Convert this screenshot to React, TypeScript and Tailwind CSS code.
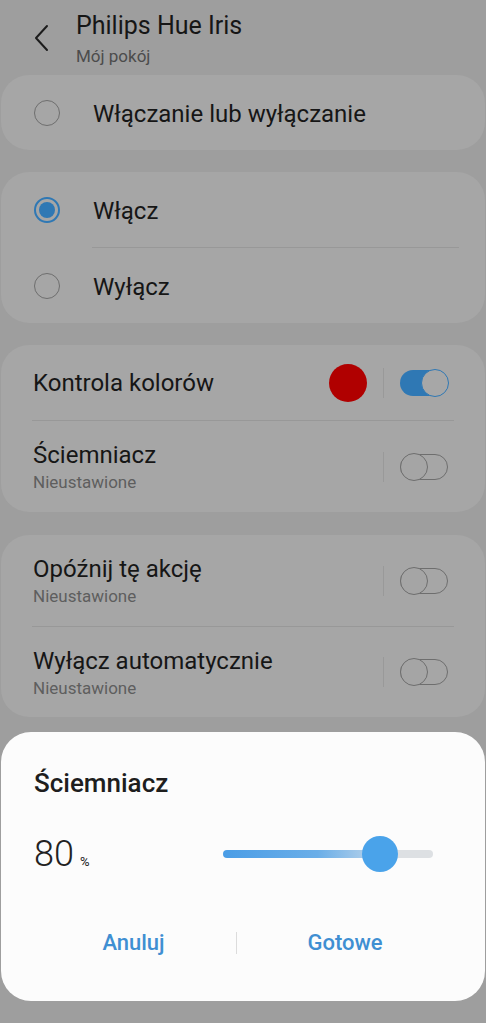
import { ReactNode } from "react";

const font = { fontFamily: "Roboto, 'Noto Sans', sans-serif" };

function Radio({ checked }: { checked?: boolean }) {
  return checked ? (
    <div className="w-[26px] h-[26px] rounded-full border-2 border-[#2f78b4] flex items-center justify-center">
      <div className="w-[16px] h-[16px] rounded-full bg-[#2f78b4]" />
    </div>
  ) : (
    <div className="w-[26px] h-[26px] rounded-full border-[1.5px] border-[#6e6e6e]" />
  );
}

function Toggle({ on }: { on?: boolean }) {
  return (
    <div className="relative w-[49px] h-[28px] flex items-center">
      <div
        className={
          on
            ? "w-[48px] h-[26px] rounded-full bg-[#2f78b4]"
            : "w-[48px] h-[26px] rounded-full border-[1.5px] border-[#6e6e6e]"
        }
      />
      <div
        className={
          on
            ? "absolute right-0 top-0 w-[28px] h-[28px] rounded-full bg-[#a7a7a7] border-[1.5px] border-[#2f78b4]"
            : "absolute left-0 top-0 w-[28px] h-[28px] rounded-full bg-[#a5a5a5] border-[1.5px] border-[#6e6e6e]"
        }
      />
    </div>
  );
}

function VDivider() {
  return <div className="w-px h-[30px] bg-[#999999]" />;
}

function RadioRow({ label, checked }: { label: string; checked?: boolean }) {
  return (
    <div className="flex items-center h-full pl-[33px]">
      <Radio checked={checked} />
      <span className="ml-[33px] mt-[2px] text-[24px] leading-[30px] text-[#161616]">{label}</span>
    </div>
  );
}

function SettingRow({
  title,
  sub,
  right,
  h,
}: {
  title: string;
  sub?: string;
  right: ReactNode;
  h: string;
}) {
  return (
    <div className={`flex items-center pl-[32px] pr-[36px] ${h}`}>
      <div className="flex-1 flex flex-col">
        <span className="text-[24px] leading-[30px] text-[#161616]">{title}</span>
        {sub && <span className="text-[17px] leading-[22px] mt-[1px] text-[#5e5e5e]">{sub}</span>}
      </div>
      {right}
    </div>
  );
}

function OffControl() {
  return (
    <div className="flex items-center">
      <VDivider />
      <div className="ml-[16px]">
        <Toggle />
      </div>
    </div>
  );
}

export default function App() {
  return (
    <div
      className="relative w-[486px] h-[1023px] bg-[#9e9e9e] overflow-hidden flex flex-col"
      style={font}
    >
      {/* Header */}
      <div className="flex h-[75px] pt-[11px] pl-[34px]">
        <svg width="16" height="28" viewBox="0 0 16 28" className="mt-[13px] mr-[26px]">
          <path d="M13 2 L2 14 L13 26" fill="none" stroke="#1c1c1c" strokeWidth="2" strokeLinecap="round" strokeLinejoin="round" />
        </svg>
        <div className="flex flex-col">
          <span className="text-[25px] leading-[30px] text-[#161616]">Philips Hue Iris</span>
          <span className="text-[17px] leading-[22px] text-[#4c4c4c] mt-[4px]">Mój pokój</span>
        </div>
      </div>

      {/* Card 1 */}
      <div className="mx-px h-[75px] rounded-[28px] bg-[#a6a6a6]">
        <RadioRow label="Włączanie lub wyłączanie" />
      </div>

      {/* Card 2 */}
      <div className="mx-px mt-[22px] h-[151px] rounded-[28px] bg-[#a6a6a6] flex flex-col">
        <div className="h-[75px]">
          <RadioRow label="Włącz" checked />
        </div>
        <div className="ml-[91px] mr-[26px] h-px bg-[#989898]" />
        <div className="h-[75px]">
          <RadioRow label="Wyłącz" />
        </div>
      </div>

      {/* Card 3 */}
      <div className="mx-px mt-[22px] h-[167px] rounded-[28px] bg-[#a6a6a6] flex flex-col">
        <SettingRow
          h="h-[75px]"
          title="Kontrola kolorów"
          right={
            <div className="flex items-center">
              <div className="w-[38px] h-[38px] rounded-full bg-[#b00000]" />
              <div className="mx-[16px]">
                <VDivider />
              </div>
              <Toggle on />
            </div>
          }
        />
        <div className="mx-[31px] h-px bg-[#989898]" />
        <SettingRow h="h-[91px]" title="Ściemniacz" sub="Nieustawione" right={<OffControl />} />
      </div>

      {/* Card 4 */}
      <div className="mx-px mt-[23px] h-[182px] rounded-[28px] bg-[#a6a6a6] flex flex-col">
        <SettingRow h="h-[91px]" title="Opóźnij tę akcję" sub="Nieustawione" right={<OffControl />} />
        <div className="mx-[31px] h-px bg-[#989898]" />
        <SettingRow h="h-[90px]" title="Wyłącz automatycznie" sub="Nieustawione" right={<OffControl />} />
      </div>

      {/* Dialog */}
      <div className="absolute left-px right-px bottom-[22px] h-[269px] rounded-[30px] bg-[#fcfcfc] flex flex-col px-[33px] pt-[35px]">
        <span className="text-[26px] leading-[32px] font-medium text-[#1e1e1e]">Ściemniacz</span>
        <div className="flex items-center mt-[35px] h-[40px]">
          <div className="w-[189px] flex items-baseline">
            <span className="text-[36px] font-light text-[#222222] leading-none">80</span>
            <span className="text-[13px] text-[#222222] ml-[6px]">%</span>
          </div>
          <div className="relative w-[210px] h-[36px] flex items-center">
            <div className="w-full h-[8px] rounded-full bg-[linear-gradient(to_right,#4a9de6_0%,#6aaee8_45%,#bfd6ea_75%,#dde0e3_80%,#dde0e3_100%)]" />
            <div className="absolute left-[139px] top-0 w-[36px] h-[36px] rounded-full bg-[#4aa3ea]" />
          </div>
        </div>
        <div className="flex items-center mt-[52px] -mx-[33px]">
          <div className="w-[235px] flex justify-center">
            <span className="text-[22px] font-medium text-[#3f8fd2] ml-[30px]">Anuluj</span>
          </div>
          <div className="w-px h-[22px] bg-[#dcdcdc]" />
          <div className="flex-1 flex justify-center">
            <span className="text-[22px] font-medium text-[#3f8fd2] -ml-[32px]">Gotowe</span>
          </div>
        </div>
      </div>
    </div>
  );
}
